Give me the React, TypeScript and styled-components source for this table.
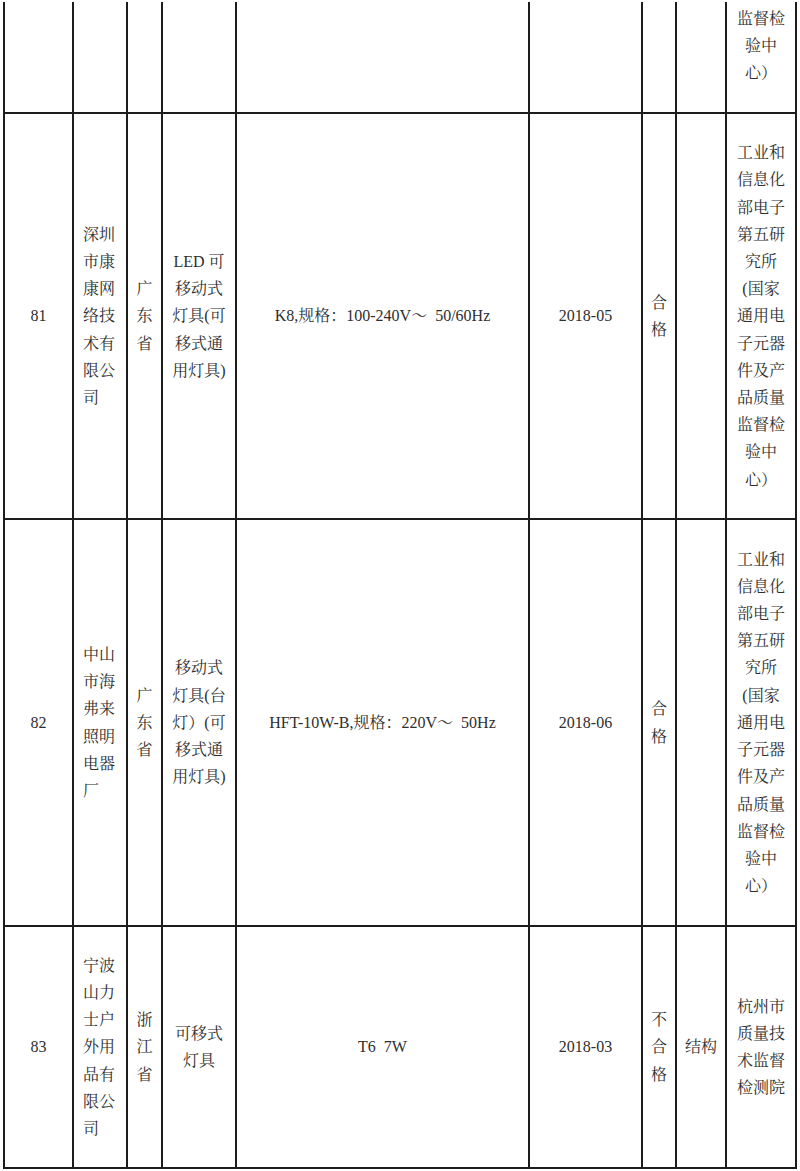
import React from 'react';
import styled, { createGlobalStyle } from 'styled-components';

const COLS = '67px 52px 33px 72px 291px 111px 32px 48px 68px';

const Global = createGlobalStyle`
  html, body { margin: 0; padding: 0; background: #fff; }
  body {
    font-family: "Liberation Serif", "Noto Serif CJK SC", "Noto Sans CJK SC", serif;
  }
`;

const Page = styled.div`
  width: 800px;
  height: 1171px;
  box-sizing: border-box;
  padding: 2px 0 0 3px;
  background: #fff;
  overflow: hidden;
`;

const Table = styled.div`
  display: flex;
  flex-direction: column;
  gap: 2px;
  width: 794px;
  box-sizing: border-box;
  padding: 0 2px 2px 2px;
  background: #1c1c1c;
`;

const Row = styled.div<{ $h: number }>`
  display: grid;
  grid-template-columns: ${COLS};
  column-gap: 2px;
  height: ${(p) => p.$h}px;
`;

const Cell = styled.div<{ $align?: 'left' | 'center'; $top?: boolean }>`
  background: #fff;
  display: flex;
  flex-direction: column;
  justify-content: ${(p) => (p.$top ? 'flex-start' : 'center')};
  align-items: ${(p) => (p.$align === 'left' ? 'flex-start' : 'center')};
  padding-top: ${(p) => (p.$top ? '3px' : '0')};
  padding-left: ${(p) => (p.$align === 'left' ? '9px' : '0')};
  text-align: ${(p) => (p.$align === 'left' ? 'left' : 'center')};
  font-size: 16px;
  line-height: 27.2px;
  color: #2e2e2e;
  overflow: hidden;
`;

const Line = styled.span`
  display: block;
  white-space: pre;
`;

type RowData = {
  no: string;
  name: string[];
  prov: string[];
  product: string[];
  model: string;
  date: string;
  result: string[];
  reason: string;
  agency: string[];
  h: number;
};

const AGENCY = [
  '工业和',
  '信息化',
  '部电子',
  '第五研',
  '究所',
  '(国家',
  '通用电',
  '子元器',
  '件及产',
  '品质量',
  '监督检',
  '验中',
  '心）',
];

const rows: RowData[] = [
  {
    no: '81',
    name: ['深圳', '市康', '康网', '络技', '术有', '限公', '司'],
    prov: ['广', '东', '省'],
    product: ['LED 可', '移动式', '灯具(可', '移式通', '用灯具)'],
    model: 'K8,规格：100-240V～  50/60Hz',
    date: '2018-05',
    result: ['合', '格'],
    reason: '',
    agency: AGENCY,
    h: 404,
  },
  {
    no: '82',
    name: ['中山', '市海', '弗来', '照明', '电器', '厂'],
    prov: ['广', '东', '省'],
    product: ['移动式', '灯具(台', '灯）(可', '移式通', '用灯具)'],
    model: 'HFT-10W-B,规格：220V～  50Hz',
    date: '2018-06',
    result: ['合', '格'],
    reason: '',
    agency: AGENCY,
    h: 405,
  },
  {
    no: '83',
    name: ['宁波', '山力', '士户', '外用', '品有', '限公', '司'],
    prov: ['浙', '江', '省'],
    product: ['可移式', '灯具'],
    model: 'T6  7W',
    date: '2018-03',
    result: ['不', '合', '格'],
    reason: '结构',
    agency: ['杭州市', '质量技', '术监督', '检测院'],
    h: 240,
  },
];

const Lines: React.FC<{ items: string[] }> = ({ items }) => (
  <>
    {items.map((t, i) => (
      <Line key={i}>{t}</Line>
    ))}
  </>
);

export default function App() {
  return (
    <>
      <Global />
      <Page>
        <Table>
          <Row $h={110}>
            <Cell />
            <Cell />
            <Cell />
            <Cell />
            <Cell />
            <Cell />
            <Cell />
            <Cell />
            <Cell $top>
              <Lines items={['监督检', '验中', '心）']} />
            </Cell>
          </Row>
          {rows.map((r) => (
            <Row key={r.no} $h={r.h}>
              <Cell>
                <Line>{r.no}</Line>
              </Cell>
              <Cell $align="left">
                <Lines items={r.name} />
              </Cell>
              <Cell>
                <Lines items={r.prov} />
              </Cell>
              <Cell>
                <Lines items={r.product} />
              </Cell>
              <Cell>
                <Line>{r.model}</Line>
              </Cell>
              <Cell>
                <Line>{r.date}</Line>
              </Cell>
              <Cell>
                <Lines items={r.result} />
              </Cell>
              <Cell>{r.reason ? <Line>{r.reason}</Line> : null}</Cell>
              <Cell>
                <Lines items={r.agency} />
              </Cell>
            </Row>
          ))}
        </Table>
      </Page>
    </>
  );
}
